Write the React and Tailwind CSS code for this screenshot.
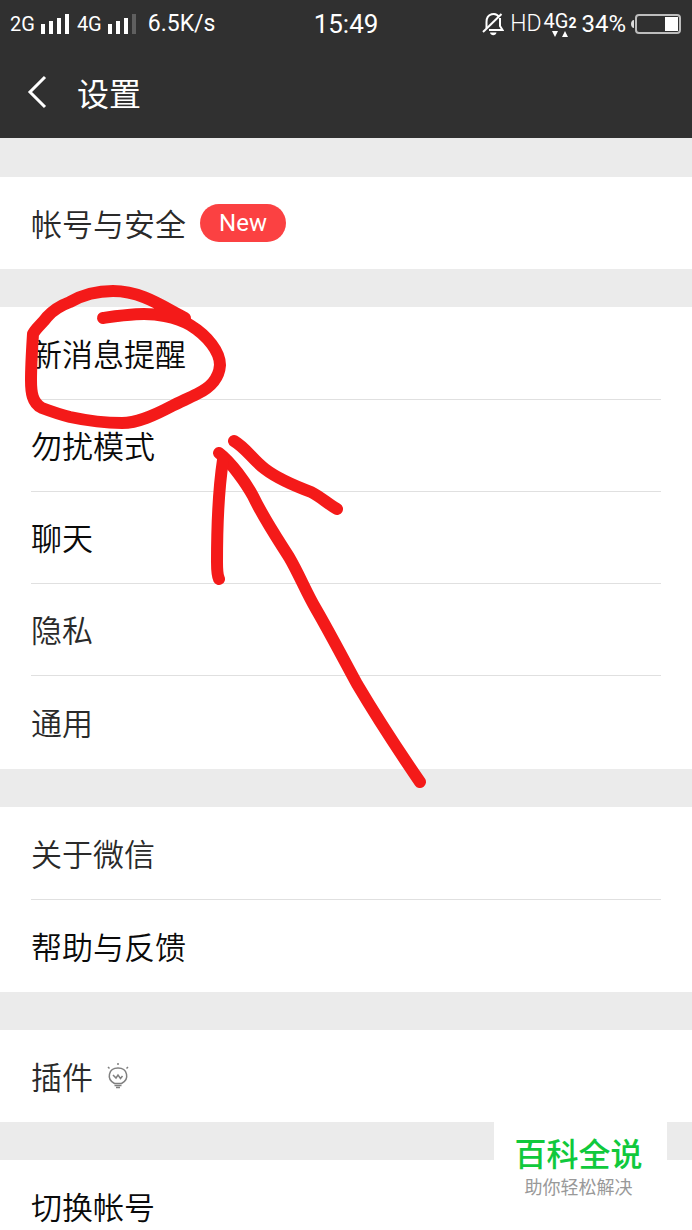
const groups = [
  [{ label: '帐号与安全', badge: 'New', soft: true }],
  [
    { label: '新消息提醒' },
    { label: '勿扰模式' },
    { label: '聊天' },
    { label: '隐私', soft: true },
    { label: '通用', soft: true },
  ],
  [{ label: '关于微信', soft: true }, { label: '帮助与反馈' }],
  [{ label: '插件', icon: true, soft: true }],
  [{ label: '切换帐号' }],
];

function Signal({ weak }) {
  return (
    <svg width="28" height="20" viewBox="0 0 28 20" fill="#fff" aria-hidden="true">
      <rect x="0" y="10" width="4" height="10" />
      <rect x="8" y="7" width="4" height="13" />
      <rect x="16" y="4" width="4" height="16" />
      <rect x="24" y="0" width="4" height="20" fill={weak ? '#5f5f5f' : '#fff'} />
    </svg>
  );
}

function MutedBell() {
  return (
    <svg width="22" height="24" viewBox="0 0 22 24" fill="none" stroke="#fff" strokeWidth="2" aria-hidden="true">
      <path d="M4.500 16V10C4.500 1 14 0 17 5" />
      <path d="M18 6V14L20.500 18H7" />
      <path d="M1 20L19.500 2" />
      <path d="M8 20.500H14.500C14 24 8.500 24 8 20.500Z" fill="#fff" stroke="none" />
    </svg>
  );
}

function Battery() {
  return (
    <svg width="50" height="22" viewBox="0 0 50 22" fill="none" aria-hidden="true">
      <path d="M3 7C-1 7 -1 15 3 15Z" fill="#ddd" />
      <rect x="5" y="2" width="44" height="18" rx="3" stroke="#bdbdbd" strokeWidth="2" />
      <rect x="34" y="4" width="13" height="14" fill="#fff" />
    </svg>
  );
}

function Bulb() {
  return (
    <svg width="22" height="26" viewBox="0 0 22 26" fill="none" stroke="#808080" aria-hidden="true">
      <path d="M7.500 20.500C-1 16 1.500 5 11 5S23 16 14.500 20.500Z" strokeWidth="1.500" />
      <path d="M6 12L9 15L11 12L13.500 15.500L15.500 13" strokeWidth="1.500" />
      <path d="M7.500 22.500H14.500M9 24.500H13" strokeWidth="1.300" />
      <path d="M11 0V2M1 4L2.500 5.500M21 4L19.500 5.500" strokeWidth="1.500" />
    </svg>
  );
}

function StatusBar() {
  return (
    <div className="relative flex h-12 items-center justify-between pl-[10px] pr-[11px] font-[Roboto,sans-serif] text-2xl text-white">
      <div className="flex items-center">
        <span className="text-xl">2G</span>
        <span className="ml-[6px]"><Signal /></span>
        <span className="ml-2 text-xl">4G</span>
        <span className="ml-[6px]"><Signal weak /></span>
        <span className="ml-3 text-[23px]">6.5K/s</span>
      </div>
      <span className="absolute inset-x-0 text-center text-[26px]">15:49</span>
      <div className="flex items-center">
        <MutedBell />
        <span className="ml-[6px] text-[23px] font-light">HD</span>
        <span className="ml-[2px] flex flex-col items-center">
          <span className="flex items-end text-xl leading-5">
            4G<span className="text-sm leading-4 font-bold">2</span>
          </span>
          <svg width="16" height="7" viewBox="0 0 16 7" fill="#fff" aria-hidden="true">
            <path d="M0 0H6L3 6ZM10 6H16L13 0Z" />
          </svg>
        </span>
        <span className="mx-[5px]">34%</span>
        <Battery />
      </div>
    </div>
  );
}

function Row({ item, last }) {
  return (
    <li className="px-[31px]">
      <button
        type="button"
        className={`flex h-[92px] w-full items-center text-left text-[31px] font-[350] ${item.soft ? 'text-[#2a2a2a]' : 'text-[#0a0a0a]'} ${last ? '' : 'border-b border-[#e0e0e0]'}`}
      >
        {item.label}
        {item.badge && (
          <span className="ml-[14px] flex h-[38px] w-[86px] items-center justify-center rounded-full bg-[#fb4142] font-[Roboto,sans-serif] text-2xl font-normal text-white">
            {item.badge}
          </span>
        )}
        {item.icon && <span className="ml-[14px]"><Bulb /></span>}
      </button>
    </li>
  );
}

// hand-drawn red circle and arrow
function Marks() {
  return (
    <svg
      className="pointer-events-none absolute left-0 top-0"
      width="440"
      height="800"
      viewBox="0 0 440 800"
      fill="none"
      stroke="#f41a19"
      strokeWidth="12"
      strokeLinecap="round"
      strokeLinejoin="round"
      aria-hidden="true"
    >
      <path d="M103 318C125 315 145 312 165 316C175 318 182 320 190 325C208 336 220 352 220 365C219 380 209 388 197 394C189 398 180 402 172 406C155 415 138 423 122 423C105 423 84 420 70 417C58 414 50 411 42 408C32 403 31 392 31 380C31 365 32 350 33 334C36 328 42 324 47 317C54 309 62 305 70 302C84 294 97 291 113 291C141 291 162 306 185 318" />
      <path d="M219 453C231 462 246 483 253 496C264 519 277 538 289 557C299 574 306 592 316 609C331 635 345 662 357 684C373 711 396 747 420 782" />
      <path d="M223 460C218 493 217 530 217 562C217 570 217 575 219 579" />
      <path d="M234 441C246 448 253 460 265 469C278 479 295 486 311 492C321 497 328 504 337 509" />
    </svg>
  );
}

function App() {
  return (
    <div className="relative h-screen overflow-hidden bg-[#ebebeb] font-['Noto_Sans_CJK_SC',sans-serif]">
      <header className="h-[138px] bg-[#303030] text-white">
        <StatusBar />
        <div className="flex h-[88px] items-center pl-[27px]">
          <button type="button" aria-label="返回">
            <svg width="20" height="34" viewBox="0 0 20 34" fill="none" stroke="#fff" strokeWidth="3" aria-hidden="true">
              <path d="M18 2L3 17L18 32" />
            </svg>
          </button>
          <h1 className="ml-[30px] text-[32px]">设置</h1>
        </div>
      </header>

      <main className="flex flex-col gap-[38px] pt-[39px]">
        {groups.map((items) => (
          <ul key={items[0].label} className={`bg-white ${items.length > 1 ? 'pt-px' : ''} ${items.length > 2 ? 'pb-px' : ''}`}>
            {items.map((item, i) => (
              <Row key={item.label} item={item} last={i === items.length - 1} />
            ))}
          </ul>
        ))}
      </main>

      <Marks />

      <div className="absolute bottom-0 right-[25px] flex h-[108px] w-[173px] flex-col items-center bg-white pt-[7px] pr-1">
        <strong className="text-[32px] leading-[46px] font-medium text-[#10c93c]">百科全说</strong>
        <span className="text-lg leading-[22px] text-[#999]">助你轻松解决</span>
      </div>
    </div>
  );
}

export default App;
